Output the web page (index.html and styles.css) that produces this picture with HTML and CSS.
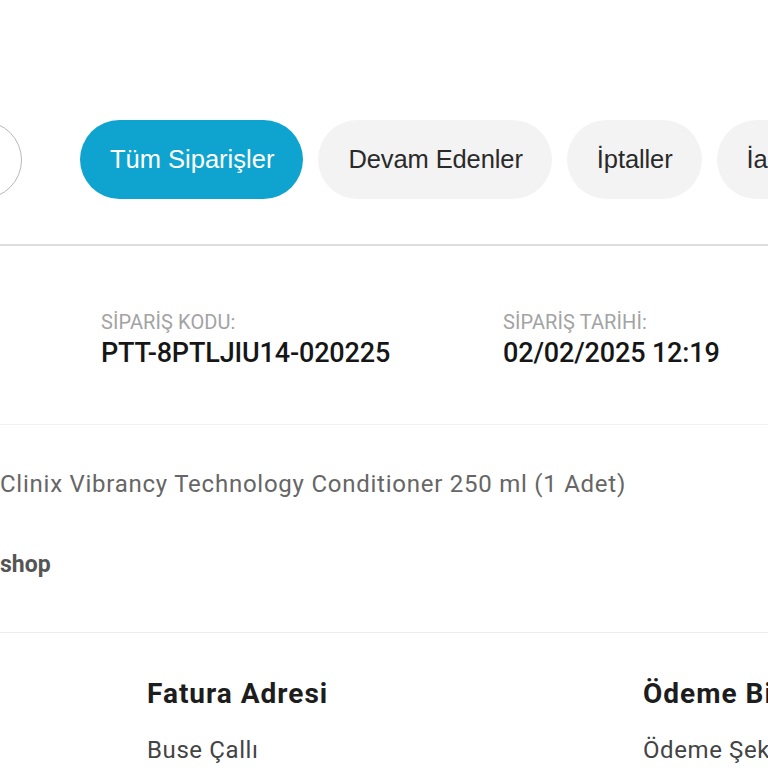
FILE: index.html
```html
<!DOCTYPE html>
<html lang="tr">
<head>
<meta charset="utf-8">
<title>Siparişlerim</title>
<link rel="stylesheet" href="styles.css">
</head>
<body>
<div class="page">
  <nav class="tabs">
    <span class="tab-circle"></span>
    <button class="tab active">Tüm Siparişler</button>
    <button class="tab">Devam Edenler</button>
    <button class="tab">İptaller</button>
    <button class="tab">İadeler</button>
  </nav>
  <div class="divider"></div>
  <section class="order-head">
    <div class="field field-code">
      <span class="label">SİPARİŞ KODU:</span>
      <span class="value">PTT-8PTLJIU14-020225</span>
    </div>
    <div class="field field-date">
      <span class="label">SİPARİŞ TARİHİ:</span>
      <span class="value">02/02/2025 12:19</span>
    </div>
  </section>
  <section class="order-items">
    <p class="product">Clinix Vibrancy Technology Conditioner 250 ml (1 Adet)</p>
    <p class="seller">shop</p>
  </section>
  <section class="addresses">
    <div class="addr-col">
      <h3 class="addr-title">Fatura Adresi</h3>
      <p class="addr-text">Buse Çallı</p>
    </div>
    <div class="addr-col">
      <h3 class="addr-title">Ödeme Bilgileri</h3>
      <p class="addr-text">Ödeme Şekli</p>
    </div>
  </section>
</div>
</body>
</html>
```
FILE: styles.css
```css
html, body {
  margin: 0;
  padding: 0;
  background: #ffffff;
  overflow: hidden;
}
.page {
  width: 768px;
  height: 768px;
  overflow: hidden;
  font-family: Roboto, "Noto Sans", sans-serif;
}
.tabs {
  display: flex;
  align-items: center;
  gap: 15px;
  margin-top: 120px;
  height: 79px;
  white-space: nowrap;
}
.tab-circle {
  flex: none;
  width: 76px;
  height: 76px;
  border: 1px solid #b8b8b8;
  border-radius: 50%;
  margin-left: -56px;
  margin-right: 43px;
  background: #fff;
}
.tab {
  flex: none;
  height: 79px;
  padding: 0 29px 0 30px;
  border: none;
  border-radius: 40px;
  background: #f3f3f3;
  color: #2a2a2a;
  font-family: "Liberation Sans", Arial, sans-serif;
  font-size: 25.5px;
  letter-spacing: -0.1px;
}
.tab.active {
  background: #0fa4d0;
  color: #fff;
  letter-spacing: 0;
}
.divider {
  margin-top: 45px;
  height: 2px;
  background: #dedede;
}
.order-head {
  display: flex;
  height: 179px;
  border-bottom: 1px solid #f1f1f1;
  box-sizing: border-box;
  padding-top: 64px;
}
.field {
  display: flex;
  flex-direction: column;
  gap: 3px;
}
.field-code {
  margin-left: 101px;
  width: 402px;
}
.label {
  font-size: 20px;
  line-height: 24px;
  color: #a3a3a3;
  letter-spacing: 0.1px;
}
.value {
  font-size: 27px;
  line-height: 32px;
  font-weight: 500;
  color: #161616;
  letter-spacing: -0.15px;
}
.order-items {
  padding-top: 45px;
  height: 208px;
  box-sizing: border-box;
  border-bottom: 1px solid #ececec;
}
.product {
  margin: 0;
  font-size: 24px;
  line-height: 28px;
  color: #666;
  letter-spacing: 0.75px;
  white-space: nowrap;
}
.seller {
  margin: 53px 0 0 0;
  font-size: 23px;
  line-height: 28px;
  font-weight: 700;
  color: #555;
  white-space: nowrap;
}
.addresses {
  display: flex;
  padding-top: 44px;
  margin-left: 147px;
}
.addr-col {
  width: 496px;
  flex: none;
}
.addr-title {
  margin: 0;
  font-size: 28px;
  line-height: 34px;
  font-weight: 700;
  color: #1d1d1d;
  letter-spacing: 1px;
  white-space: nowrap;
}
.addr-text {
  margin: 24px 0 0 0;
  font-size: 24px;
  line-height: 30px;
  color: #444;
  letter-spacing: 0.6px;
  white-space: nowrap;
}
```
